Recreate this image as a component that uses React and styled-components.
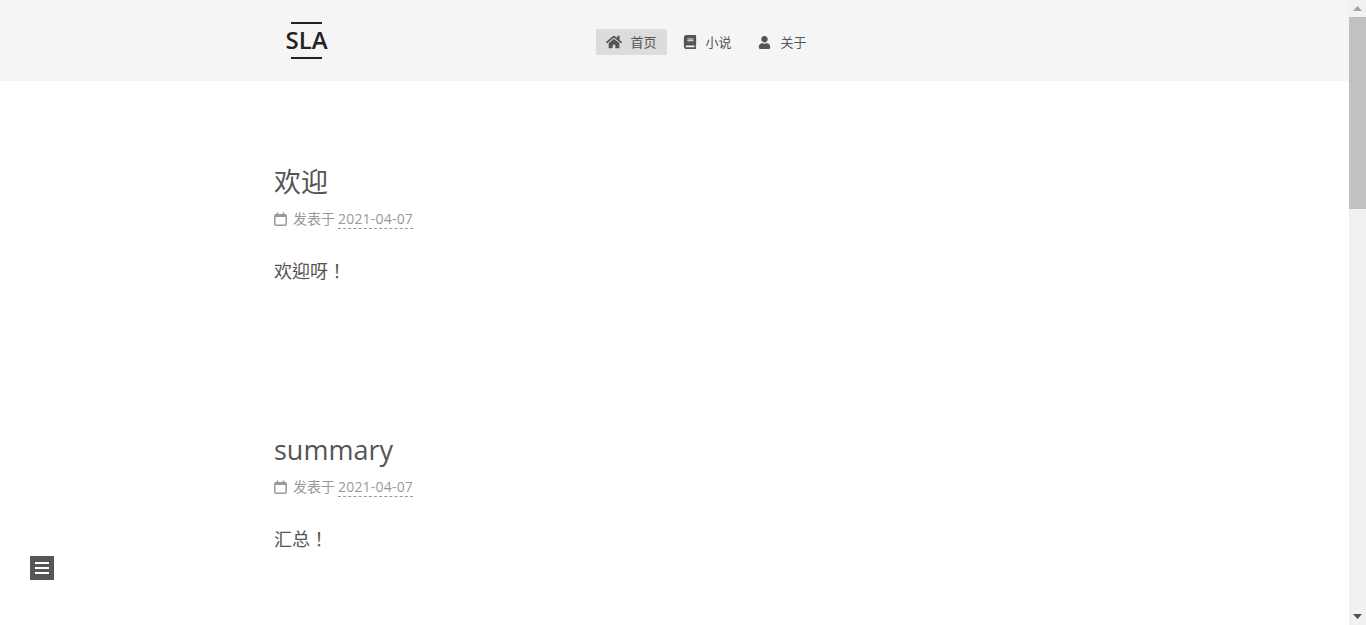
import React from 'react'
import styled, { createGlobalStyle } from 'styled-components'
import { FaHome, FaBook, FaUser } from 'react-icons/fa'

const posts = [
    { title: '欢迎', date: '2021-04-07', body: '欢迎呀！' },
    { title: 'summary', date: '2021-04-07', body: '汇总！' },
]

const links = [
    { label: '首页', icon: <FaHome />, size: 16, gap: 9, active: true },
    { label: '小说', icon: <FaBook />, size: 14, gap: 8 },
    { label: '关于', icon: <FaUser />, size: 13, gap: 8 },
]

const CalendarIcon = () => (
    <svg width="13" height="14" viewBox="0 0 13 14">
        <rect x="0.8" y="2.8" width="11.4" height="10.4" rx="1.2" fill="none" stroke="#999" strokeWidth="1.5" />
        <rect x="1" y="2.5" width="11" height="2.5" fill="#999" />
        <path d="M3.5 0.5V3M9.5 0.5V3" stroke="#999" strokeWidth="1.6" />
    </svg>
)

const App = () => {
    return (
        <>
            <GlobalStyle />
            <Header>
                <HeaderInner>
                    <Brand>
                        <BrandLine />
                        <BrandText>SLA</BrandText>
                        <BrandLine />
                    </Brand>
                    <Nav>
                        {links.map((link) => (
                            <NavItem key={link.label} $active={link.active}>
                                <NavIcon $size={link.size} $gap={link.gap}>{link.icon}</NavIcon>
                                <NavLabel>{link.label}</NavLabel>
                            </NavItem>
                        ))}
                    </Nav>
                </HeaderInner>
            </Header>

            <Main>
                {posts.map((post) => (
                    <Post key={post.title}>
                        <PostTitle>{post.title}</PostTitle>
                        <PostMeta>
                            <MetaIcon><CalendarIcon /></MetaIcon>
                            <MetaLabel>发表于</MetaLabel>
                            <PostDate>{post.date}</PostDate>
                        </PostMeta>
                        <PostBody>{post.body}</PostBody>
                    </Post>
                ))}
            </Main>

            <SidebarToggle>
                <ToggleLine />
                <ToggleLine />
                <ToggleLine />
            </SidebarToggle>

            <Scrollbar>
                <ScrollArrow viewBox="0 0 9 5"><path d="M4.5 0 L9 5 L0 5 Z" fill="#a3a3a3" /></ScrollArrow>
                <ScrollTrack>
                    <ScrollThumb />
                </ScrollTrack>
                <ScrollArrow viewBox="0 0 9 5"><path d="M0 0 L9 0 L4.5 5 Z" fill="#505050" /></ScrollArrow>
            </Scrollbar>
        </>
    )
}

export default App

const GlobalStyle = createGlobalStyle`
    html, body {
        margin: 0;
        padding: 0;
        height: 625px;
        overflow: hidden;
        background: #fff;
        color: #555;
        font-family: "Open Sans", "Noto Sans CJK SC", sans-serif;
    }
`

const Header = styled.header`
    width: 1349px;
    height: 81px;
    background: #f5f5f5;
`

const HeaderInner = styled.div`
    width: 800px;
    height: 100%;
    margin: 0 auto;
    display: flex;
    align-items: flex-start;
`

const Brand = styled.div`
    width: 42px;
    margin: 22px 0 0 11px;
    display: flex;
    flex-direction: column;
    align-items: center;
`

const BrandLine = styled.div`
    width: 31px;
    height: 2px;
    background: #222;
`

const BrandText = styled.div`
    height: 33px;
    line-height: 31px;
    font-size: 24px;
    font-weight: 600;
    color: #222;
`

const Nav = styled.nav`
    display: flex;
    margin: 29px 0 0 268px;
`

const NavItem = styled.a`
    display: flex;
    align-items: center;
    height: 26px;
    padding: 0 10px;
    margin-right: 5px;
    border-radius: 2px;
    font-size: 13px;
    color: #555;
    background: ${(p) => (p.$active ? '#dcdcdc' : 'transparent')};
`

const NavIcon = styled.span`
    display: flex;
    justify-content: center;
    width: 16px;
    margin-right: ${(p) => p.$gap}px;
    font-size: ${(p) => p.$size}px;
    color: #555;
`

const NavLabel = styled.span`
    margin-bottom: 2px;
`

const Main = styled.main`
    width: 1349px;
    height: 544px;
    padding: 80px 0 0 274px;
    box-sizing: border-box;
    overflow: hidden;
`

const Post = styled.article`
    & + & {
        margin-top: 144px;
    }
`

const PostTitle = styled.h1`
    margin: 0;
    font-size: 27px;
    font-weight: 400;
    line-height: 42px;
    color: #555;
`

const PostMeta = styled.div`
    display: flex;
    align-items: center;
    height: 25px;
    margin-top: 3px;
    font-size: 14px;
    color: #999;
`

const MetaIcon = styled.span`
    display: flex;
    width: 13px;
    margin-right: 6px;
`

const MetaLabel = styled.span`
    margin-bottom: 2px;
`

const PostDate = styled.span`
    margin-left: 3px;
    padding-top: 2px;
    line-height: 18px;
    letter-spacing: 0.2px;
    border-bottom: 1px dashed #999;
`

const PostBody = styled.p`
    margin: 24px 0 0;
    font-family: "Noto Sans CJK TC", sans-serif;
    font-size: 18px;
    line-height: 30px;
    color: #555;
`

const SidebarToggle = styled.div`
    position: fixed;
    left: 30px;
    top: 556px;
    width: 24px;
    height: 24px;
    background: #555;
    display: flex;
    flex-direction: column;
    align-items: center;
    justify-content: center;
    gap: 3px;
`

const ToggleLine = styled.div`
    width: 14px;
    height: 2px;
    background: #fff;
`

const Scrollbar = styled.div`
    position: fixed;
    top: 0;
    right: 0;
    width: 17px;
    height: 625px;
    background: #f1f1f1;
    display: flex;
    flex-direction: column;
    align-items: center;
`

const ScrollArrow = styled.svg`
    flex: none;
    width: 9px;
    height: 5px;
    margin: 6px 0;
`

const ScrollTrack = styled.div`
    flex: 1;
    width: 100%;
`

const ScrollThumb = styled.div`
    width: 100%;
    height: 192px;
    background: #c1c1c1;
`
